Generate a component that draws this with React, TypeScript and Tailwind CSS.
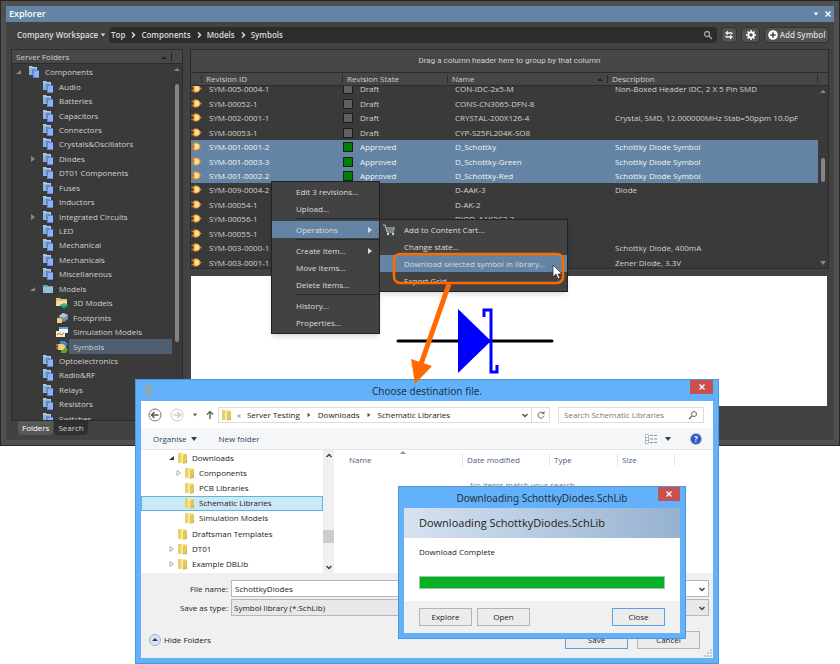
import React from 'react';

type FolderIcon = 'stack' | 'folder' | 'model3d' | 'footprint' | 'simulation' | 'symbol';

interface ServerFolder {
  name: string;
  level: 0 | 1 | 2;
  icon: FolderIcon;
  arrow?: 'open' | 'closed';
  selected?: boolean;
}

const serverFolders: ServerFolder[] = [
  { name: 'Components', level: 0, icon: 'stack', arrow: 'open' },
  { name: 'Audio', level: 1, icon: 'stack' },
  { name: 'Batteries', level: 1, icon: 'stack' },
  { name: 'Capacitors', level: 1, icon: 'stack' },
  { name: 'Connectors', level: 1, icon: 'stack' },
  { name: 'Crystals&Oscillators', level: 1, icon: 'stack' },
  { name: 'Diodes', level: 1, icon: 'stack', arrow: 'closed' },
  { name: 'DT01 Components', level: 1, icon: 'stack' },
  { name: 'Fuses', level: 1, icon: 'stack' },
  { name: 'Inductors', level: 1, icon: 'stack' },
  { name: 'Integrated Circuits', level: 1, icon: 'stack', arrow: 'closed' },
  { name: 'LED', level: 1, icon: 'stack' },
  { name: 'Mechanical', level: 1, icon: 'stack' },
  { name: 'Mechanicals', level: 1, icon: 'stack' },
  { name: 'Miscellaneous', level: 1, icon: 'stack' },
  { name: 'Models', level: 1, icon: 'folder', arrow: 'open' },
  { name: '3D Models', level: 2, icon: 'model3d' },
  { name: 'Footprints', level: 2, icon: 'footprint' },
  { name: 'Simulation Models', level: 2, icon: 'simulation' },
  { name: 'Symbols', level: 2, icon: 'symbol', selected: true },
  { name: 'Optoelectronics', level: 1, icon: 'stack' },
  { name: 'Radio&RF', level: 1, icon: 'stack' },
  { name: 'Relays', level: 1, icon: 'stack' },
  { name: 'Resistors', level: 1, icon: 'stack' },
  { name: 'Switches', level: 1, icon: 'stack' },
];

const levelPadding = {
  0: 'pl-1',
  1: 'pl-[18px]',
  2: 'pl-8',
};

interface Revision {
  id: string;
  state?: 'Draft' | 'Approved';
  name: string;
  description: string;
}

const revisions: Revision[] = [
  { id: 'SYM-005-0004-1', state: 'Draft', name: 'CON-IDC-2x5-M', description: 'Non-Boxed Header IDC, 2 X 5 Pin SMD' },
  { id: 'SYM-00052-1', state: 'Draft', name: 'CONS-CN3065-DFN-8', description: '' },
  { id: 'SYM-002-0001-1', state: 'Draft', name: 'CRYSTAL-200X126-4', description: 'Crystal, SMD, 12.000000MHz Stab=50ppm 10.0pF' },
  { id: 'SYM-00053-1', state: 'Draft', name: 'CYP-S25FL204K-SO8', description: '' },
  { id: 'SYM-001-0001-2', state: 'Approved', name: 'D_Schottky', description: 'Schottky Diode Symbol' },
  { id: 'SYM-001-0003-3', state: 'Approved', name: 'D_Schottky-Green', description: 'Schottky Diode Symbol' },
  { id: 'SYM-001-0002-2', state: 'Approved', name: 'D_Schottky-Red', description: 'Schottky Diode Symbol' },
  { id: 'SYM-009-0004-2', name: 'D-AAK-3', description: 'Diode' },
  { id: 'SYM-00054-1', name: 'D-AK-2', description: '' },
  { id: 'SYM-00056-1', name: 'DIOD_A1K2C3-3', description: '' },
  { id: 'SYM-00055-1', name: '', description: '' },
  { id: 'SYM-003-0000-1', name: '', description: 'Schottky Diode, 400mA' },
  { id: 'SYM-003-0001-1', name: '', description: 'Zener Diode, 3.3V' },
];

const localFolders = [
  { name: 'Downloads', nested: false, arrow: 'open' },
  { name: 'Components', nested: true, arrow: 'closed' },
  { name: 'PCB Libraries', nested: true },
  { name: 'Schematic Libraries', nested: true, selected: true },
  { name: 'Simulation Models', nested: true },
  { name: 'Draftsman Templates', nested: false },
  { name: 'DT01', nested: false, arrow: 'closed' },
  { name: 'Example DBLib', nested: false, arrow: 'closed' },
  { name: '', nested: false },
];

const gridColumns = 'grid grid-cols-[10px_141px_105px_160px_1fr_11px]';

function TreeIcon({ icon }: { icon: FolderIcon }) {
  return (
    <svg viewBox="0 0 12 12" className="h-3 w-3 shrink-0">
      {icon === 'stack' && (
        <>
          <path d="M1 0h3l1 1h4v8H1z" fill="#a9cbdf" />
          <path d="M1 2h7v7H1z" fill="#8fb4cf" />
          <path d="M4 3h3l1 1h3v8H5V8H4z" fill="#5f86d8" />
          <path d="M6 5h5v6H6z" fill="#8fb0fa" />
        </>
      )}
      {icon === 'folder' && (
        <>
          <path d="M1 2h4l1 1h5v7H1z" fill="#6fa3c4" />
          <path d="M1 4h10v6H1z" fill="#93c1dd" />
        </>
      )}
      {icon === 'model3d' && (
        <>
          <path d="M0 1h4l1 1h6v7H0z" fill="#e7bd79" />
          <path d="M1 4h10L9 9H0z" fill="#f5dca8" />
          <path d="M4 8l4-2 4 2-4 3z" fill="#35b383" />
          <path d="M4 8l4 2 4-2v1l-4 3-4-3z" fill="#1d8a60" />
        </>
      )}
      {icon === 'footprint' && (
        <>
          <path d="M3 4l4-3 5 2v4L8 10 3 8z" fill="#7d8fa0" />
          <path d="M3 4l4-3 5 2-4 3z" fill="#b4c4d2" />
          <path d="M1 6h2l3 1v4H1z" fill="#f1cd85" />
        </>
      )}
      {icon === 'simulation' && (
        <>
          <path d="M3 1h9v6H3z" fill="#f2f6fa" />
          <path d="M3 1h9v2H3z" fill="#5ba3dc" />
          <path d="M0 5h9v6H0z" fill="#f7ead2" />
          <path d="M1 9l2-2 2 2 3-2" fill="none" stroke="#c27a3c" />
        </>
      )}
      {icon === 'symbol' && (
        <>
          <path d="M4 0h5l3 3-3 3H4z" fill="#3f7fe0" />
          <path d="M5 6h5l2 3-2 3H5z" fill="#5a9e42" />
          <path d="M2 3h5l3 2.500-3 3.500H2z" fill="#f3cf6a" />
          <path d="M0 4h3M0 7h3" stroke="#e5a93c" />
        </>
      )}
    </svg>
  );
}

function GateIcon() {
  return (
    <svg viewBox="0 0 11 10" className="h-2.5 w-[11px]">
      <path d="M0.500 2.500h3M0.500 6.500h3M8 4.500h2.500" stroke="#e8791c" strokeWidth="1.500" />
      <path d="M3 1h3c4 1 4 6 0 7H3z" fill="#f8e08c" stroke="#e78a2a" />
    </svg>
  );
}

function YellowFolder() {
  return (
    <svg viewBox="0 0 12 12" className="h-3 w-3 shrink-0">
      <path d="M1 1h4l1 2v8H1z" fill="#ecd06a" />
      <path d="M4 1h5v10H4z" fill="#f8e79d" />
      <path d="M6 3l4-1v9L6 12z" fill="#e6c657" />
      <path d="M9 8h1v3H9z" fill="#8fb8a0" />
    </svg>
  );
}

function Arrow({ direction, className = '' }: { direction: 'up' | 'down' | 'right' | 'corner'; className?: string }) {
  const paths = {
    up: 'M0 5l3-3 3 3z',
    down: 'M0 1h6L3 5z',
    right: 'M1 0l4 3-4 3z',
    corner: 'M5 1v4H0z',
  };
  return (
    <svg viewBox="0 0 6 6" className={`h-1.5 w-1.5 shrink-0 ${className}`}>
      <path d={paths[direction]} fill="currentColor" />
    </svg>
  );
}

function Chevron({ direction, className = '' }: { direction: 'up' | 'down' | 'right'; className?: string }) {
  const paths = { up: 'M1.500 5L4 2.500 6.500 5', down: 'M1.500 3L4 5.500 6.500 3', right: 'M3 1.500L5.500 4 3 6.500' };
  return (
    <svg viewBox="0 0 8 8" className={`h-2 w-2 shrink-0 ${className}`}>
      <path d={paths[direction]} fill="none" stroke="currentColor" strokeWidth="1.500" />
    </svg>
  );
}

function CloseIcon() {
  return (
    <svg viewBox="0 0 6 6" className="h-1.5 w-1.5">
      <path d="M0.500 0.500l5 5M5.500 0.500l-5 5" stroke="currentColor" strokeWidth="1.300" />
    </svg>
  );
}

function Toolbar() {
  const crumbs = ['Top', 'Components', 'Models', 'Symbols'];
  return (
    <div className="flex h-4 items-center gap-1 pr-[5px] pl-[11px] font-semibold text-[#dcdcdc]">
      <button className="flex w-[88px] shrink-0 items-center gap-0.5 whitespace-nowrap">
        Company Workspace
        <Arrow direction="down" className="scale-75" />
      </button>
      <nav className="flex h-full flex-1 items-center rounded-sm bg-[#2c2c2c] pr-1 pl-0.5">
        {crumbs.map((crumb, i) => (
          <React.Fragment key={crumb}>
            {i > 0 && <Chevron direction="right" className="mx-1" />}
            <button>{crumb}</button>
          </React.Fragment>
        ))}
        <button aria-label="Search" className="ml-auto">
          <svg viewBox="0 0 10 10" className="h-2.5 w-2.5">
            <circle cx="4" cy="4" r="2.500" fill="none" stroke="#a0a0a0" strokeWidth="1.300" />
            <path d="M6 6l3 3" stroke="#a0a0a0" strokeWidth="1.500" />
          </svg>
        </button>
      </nav>
      <button aria-label="Refresh" className="flex h-full w-4 items-center justify-center rounded-sm border border-[#333] bg-[#525252]">
        <svg viewBox="0 0 10 10" className="h-2.5 w-2.5 shrink-0">
          <path d="M3 3h4.500l1 1M7 7H2.500l-1-1" fill="none" stroke="#eee" strokeWidth="1.400" />
          <path d="M4 .5v5L1 3zM6 4.500v5L9 7z" fill="#eee" />
        </svg>
      </button>
      <button aria-label="Settings" className="flex h-full w-[19px] items-center justify-center rounded-sm border border-[#333] bg-[#525252]">
        <svg viewBox="0 0 10 10" className="h-2.5 w-2.5">
          <circle cx="5" cy="5" r="2.700" fill="none" stroke="#fff" strokeWidth="1.800" />
          <path d="M5 0v2M5 8v2M0 5h2M8 5h2M1.500 1.500l1.400 1.400M7.100 7.100l1.400 1.400M8.500 1.500L7.100 2.900M2.900 7.100L1.500 8.500" stroke="#fff" strokeWidth="1.500" />
        </svg>
      </button>
      <button className="flex h-full w-[65px] items-center justify-center gap-0.5 rounded-sm border border-[#333] bg-[#525252] whitespace-nowrap">
        <svg viewBox="0 0 10 10" className="h-2.5 w-2.5 shrink-0">
          <circle cx="5" cy="5" r="4.800" fill="#fff" />
          <path d="M5 2.300v5.400M2.300 5h5.400" stroke="#444" strokeWidth="1.500" />
        </svg>
        Add Symbol
      </button>
    </div>
  );
}

function FolderTree() {
  return (
    <aside className="flex w-[172px] shrink-0 flex-col">
      <div className="border border-[#2c2c2c] bg-[#3a3a3a]">
        <div className="flex h-3.5 items-center border-b border-[#2c2c2c] bg-[#484848] px-1">
          Server Folders
          <Arrow direction="up" className="ml-auto text-[#222]" />
          <span className="mr-1.5 ml-1 h-2 border-l border-[#222]" />
        </div>
        <div className="flex h-[356px] overflow-hidden">
          <ul className="mt-px grid h-[361px] flex-1 auto-rows-fr">
            {serverFolders.map((folder) => (
              <li key={folder.name} className={`flex items-center ${levelPadding[folder.level]}`}>
                <span className="w-3 text-[#888]">
                  {folder.arrow && <Arrow direction={folder.arrow === 'open' ? 'corner' : 'right'} />}
                </span>
                <TreeIcon icon={folder.icon} />
                <button className={`ml-px h-full flex-1 pl-1 text-left ${folder.selected ? 'bg-[#4f5f70]' : ''}`}>
                  {folder.name}
                </button>
              </li>
            ))}
          </ul>
          <div className="flex w-2.5 flex-col items-center text-[#888]">
            <Arrow direction="up" className="mt-0.5" />
            <div className="mt-3 h-[258px] w-1 rounded-sm bg-[#858585]" />
          </div>
        </div>
      </div>
      <div className="flex h-3.5 gap-px pl-[7px]">
        <button className="rounded-b-sm bg-[#585858] px-1 text-white">Folders</button>
        <button className="rounded-b-sm bg-[#303030] px-1">Search</button>
      </div>
    </aside>
  );
}

function RevisionGrid() {
  return (
    <div className="flex flex-col overflow-hidden border border-[#2c2c2c] bg-[#3a3a3a]">
      <div className="flex h-[22px] items-center justify-center bg-[#464646] font-[Roboto]">
        Drag a column header here to group by that column
      </div>
      <div className="relative">
        <table className="block h-[196px] overflow-hidden text-left">
          <thead className="relative z-10 block border-y border-[#2c2c2c] bg-[#464646]">
            <tr className={`${gridColumns} h-3 items-center`}>
              <th aria-label="Type" />
              <th className="border-l border-[#2c2c2c] pl-1 leading-none font-normal">Revision ID</th>
              <th className="border-l border-[#2c2c2c] pl-1 leading-none font-normal">Revision State</th>
              <th className="flex items-center justify-between border-l border-[#2c2c2c] px-1 leading-none font-normal">
                Name
                <Arrow direction="up" className="text-[#222]" />
              </th>
              <th className="border-l border-[#2c2c2c] pl-1 leading-none font-normal">Description</th>
              <th className="h-2 border-l border-[#2c2c2c]" />
            </tr>
          </thead>
          <tbody className="-mt-1 grid h-[188px] auto-rows-fr">
            {revisions.map((rev) => (
              <tr
                key={rev.id}
                className={`${gridColumns} mr-2.5 items-center ${
                  rev.state === 'Approved' ? 'bg-[#6384a4] text-[#f4f4f4]' : ''
                }`}
              >
                <td><GateIcon /></td>
                <td className="pl-2">{rev.id}</td>
                <td className="flex items-center gap-[7px] pl-px">
                  {rev.state && (
                    <>
                      <span
                        className={`h-2.5 w-2.5 border border-[#1c1c1c] ${
                          rev.state === 'Approved' ? 'bg-[#008000]' : 'bg-[#606060]'
                        }`}
                      />
                      {rev.state}
                    </>
                  )}
                </td>
                <td className="pl-2">{rev.name}</td>
                <td className="pl-2 whitespace-nowrap">{rev.description}</td>
              </tr>
            ))}
          </tbody>
        </table>
        {/* Scrollbar */}
        <div className="absolute top-4 right-0 bottom-0.5 flex w-2.5 flex-col items-center text-[#888]">
          <Arrow direction="up" />
          <div className="mt-16 h-6 w-1 rounded-sm bg-[#858585]" />
          <Arrow direction="down" className="mt-auto" />
        </div>
      </div>
    </div>
  );
}

function SymbolPreview() {
  return (
    <div className="mr-0.5 ml-px h-[130px] bg-white pl-[204px]">
      <svg viewBox="0 0 160 130" className="h-[130px] w-40">
        <path d="M3 65h154" stroke="#000" strokeWidth="3" strokeLinecap="round" />
        <path d="M63 33v64l33-32z" fill="#00f" />
        <path d="M89 41v-7h7v62h6v-7" fill="none" stroke="#00f" strokeWidth="3" />
      </svg>
    </div>
  );
}

function MenuItem({ label, active, submenu, icon }: { label: string; active?: boolean; submenu?: boolean; icon?: React.ReactNode }) {
  return (
    <button className={`flex h-[17px] w-full items-center pr-1.5 text-left whitespace-nowrap ${active ? 'bg-[#6384a4]' : ''}`}>
      <span className="w-6 shrink-0 pl-0.5">{icon}</span>
      {label}
      {submenu && <Arrow direction="right" className="ml-auto" />}
    </button>
  );
}

function MenuDivider() {
  return <hr className="mt-px mb-0.5 ml-6 border-[#2a2a2a]" />;
}

function ContextMenus() {
  return (
    <div className="text-[#dcdcdc]">
      <div className="absolute top-[181px] left-[271px] w-[109px] border border-[#222] bg-[#424242] pt-px pb-0.5 shadow-md">
        <MenuItem label="Edit 3 revisions..." />
        <MenuItem label="Upload..." />
        <MenuDivider />
        <MenuItem label="Operations" active submenu />
        <MenuDivider />
        <MenuItem label="Create Item..." submenu />
        <MenuItem label="Move Items..." />
        <MenuItem label="Delete Items..." />
        <MenuDivider />
        <MenuItem label="History..." />
        <MenuItem label="Properties..." />
      </div>
      <div className="absolute top-[219px] left-[379px] w-[189px] border border-[#222] bg-[#424242] pt-px pb-0.5 shadow-md">
        <MenuItem
          label="Add to Content Cart..."
          icon={
            <svg viewBox="0 0 14 12" className="h-3 w-3.5">
              <path d="M1 1h2l2 7h7" fill="none" stroke="#b8ccd0" />
              <path d="M4 3h9l-1 4H5z" fill="#8fa8ad" />
              <path d="M6 3v4M8 3v4M10 3v4" stroke="#424242" strokeWidth=".7" />
              <circle cx="6" cy="10" r="1.200" fill="#c8d4d6" />
              <circle cx="11" cy="10" r="1.200" fill="#c8d4d6" />
            </svg>
          }
        />
        <MenuItem label="Change state..." />
        <MenuItem label="Download selected symbol in library..." active />
        <MenuItem label="Export Grid..." />
      </div>
      {/* Callout */}
      <svg viewBox="0 0 180 140" className="absolute top-[250px] left-[390px] z-20 h-[140px] w-[180px]">
        <rect x="4" y="4" width="169" height="29" rx="6" fill="none" stroke="#ff6a00" strokeWidth="2.500" />
        <path d="M59 34L31 114" stroke="#ff6a00" strokeWidth="5" />
        <path d="M21 109l21 7-17 18z" fill="#ff6a00" />
        <path d="M163 15v12l3-3 2 5 2-1-2-4h4z" fill="#fff" stroke="#222" strokeWidth=".7" />
      </svg>
    </div>
  );
}

function ExplorerPanel() {
  return (
    <section className="border border-[#262626] bg-[#505050] p-[5px] leading-3 text-[#d0d0d0]">
      <header className="flex h-4 items-center bg-[#6384a4] px-[3px] text-white">
        <h1 className="text-[9px] font-semibold">Explorer</h1>
        <button aria-label="Panel options" className="ml-auto"><Arrow direction="down" className="scale-75" /></button>
        <button aria-label="Close panel" className="ml-1.5"><CloseIcon /></button>
      </header>
      <div className="bg-[#424242] py-[5px]">
        <Toolbar />
        <div className="mt-1.5 flex gap-[7px] px-[5px]">
          <FolderTree />
          <div className="flex min-w-0 flex-1 flex-col gap-[7px]">
            <RevisionGrid />
            <SymbolPreview />
          </div>
        </div>
      </div>
    </section>
  );
}

function AddressBar() {
  return (
    <div className="flex h-[27px] items-center gap-2 pr-[9px] pl-[7px] text-[#222]">
      <button aria-label="Back">
        <svg viewBox="0 0 14 14" className="h-3.5 w-3.5">
          <circle cx="7" cy="7" r="6" fill="none" stroke="#777" />
          <path d="M10.500 7h-7M6.500 4l-3 3 3 3" fill="none" stroke="#555" strokeWidth="1.400" />
        </svg>
      </button>
      <button aria-label="Forward">
        <svg viewBox="0 0 14 14" className="h-3.5 w-3.5">
          <circle cx="7" cy="7" r="6" fill="none" stroke="#ccc" />
          <path d="M3.500 7h7M7.500 4l3 3-3 3" fill="none" stroke="#ccc" strokeWidth="1.400" />
        </svg>
      </button>
      <button aria-label="Recent locations"><Arrow direction="down" className="scale-75 text-[#666]" /></button>
      <button aria-label="Up">
        <svg viewBox="0 0 8 10" className="h-2.5 w-2">
          <path d="M4 9V2M1 4.500L4 1.500l3 3" fill="none" stroke="#666" strokeWidth="1.500" />
        </svg>
      </button>
      <div className="-ml-1 flex h-4 flex-1 items-center border border-[#dcdcdc] pl-0.5 whitespace-nowrap">
        <YellowFolder />
        <span className="mr-1.5 ml-1 text-[#666]">«</span>
        <button>Server Testing</button>
        <Arrow direction="right" className="mx-1.5 scale-75 text-[#555]" />
        <button>Downloads</button>
        <Arrow direction="right" className="mx-1.5 scale-75 text-[#555]" />
        <button>Schematic Libraries</button>
        <button aria-label="Previous locations" className="ml-auto px-0.5"><Chevron direction="down" className="text-[#555]" /></button>
        <button aria-label="Refresh" className="flex h-full w-[18px] items-center justify-center border-l border-[#dcdcdc]">
          <svg viewBox="0 0 8 8" className="h-2 w-2">
            <path d="M6.500 2.500a3 3 0 1 0 .5 2" fill="none" stroke="#666" />
            <path d="M7.500 0v3h-3z" fill="#666" />
          </svg>
        </button>
      </div>
      <label className="flex h-4 w-[146px] items-center border border-[#dcdcdc] px-[5px]">
        <input
          type="text"
          aria-label="Search Schematic Libraries"
          placeholder="Search Schematic Libraries"
          className="min-w-0 flex-1 outline-none placeholder:text-[#777]"
        />
        <svg viewBox="0 0 10 10" className="h-2.5 w-2.5">
          <circle cx="6" cy="4" r="2.500" fill="none" stroke="#666" />
          <path d="M4 6L1 9" stroke="#666" strokeWidth="1.300" />
        </svg>
      </label>
    </div>
  );
}

function LocalTree() {
  return (
    <div className="flex w-[193px] shrink-0">
      <ul className="grid h-[137px] flex-1 auto-rows-fr">
        {localFolders.map((folder) => (
          <li
            key={folder.name}
            className={`flex items-center border ${folder.nested ? 'pl-[34px]' : 'pl-[27px]'} ${
              folder.selected ? 'border-[#5fb4dc] bg-[#cbe8f6]' : 'border-transparent'
            }`}
          >
            <span className="w-2">
              {folder.arrow === 'open' && <Arrow direction="corner" className="text-[#333]" />}
              {folder.arrow === 'closed' && (
                <svg viewBox="0 0 6 6" className="h-1.5 w-1.5">
                  <path d="M1 .5l3.500 2.500L1 5.500z" fill="none" stroke="#999" strokeWidth=".8" />
                </svg>
              )}
            </span>
            <YellowFolder />
            {folder.name && <button className="pl-[3px]">{folder.name}</button>}
          </li>
        ))}
      </ul>
      <div className="flex h-[123px] w-[11px] flex-col items-center bg-[#f0f0f0] py-0.5 text-[#444]">
        <Chevron direction="up" />
        <div className="mt-[70px] h-[13px] w-full bg-[#cdcdcd]" />
        <Chevron direction="down" className="mt-auto" />
      </div>
    </div>
  );
}

function SaveDialog() {
  return (
    <section className="absolute top-[379px] left-[135px] w-[584px] border border-[#4a97dd] bg-[#63b1fb] px-[5px] pb-[5px] leading-3 text-[#222]">
      <header className="relative flex h-[21px] items-center justify-center">
        <svg viewBox="0 0 10 12" className="absolute left-0.5 h-3 w-2.5">
          <path d="M2 1.500c5-1 7 2 6 5S4 11 2 10M1 4l3 1" fill="none" stroke="#b8a05c" strokeWidth="1.800" />
        </svg>
        <h2 className="font-['Noto_Sans'] text-[10px] text-[#234]">Choose destination file.</h2>
        <button aria-label="Close" className="absolute top-0 right-0 flex h-3.5 w-[23px] items-center justify-center bg-[#c75050] text-white">
          <CloseIcon />
        </button>
      </header>
      <div className="bg-white">
        <AddressBar />
        <div className="flex h-[22px] items-center border-b border-[#e4e6e8] bg-[#f5f6f7] px-3 text-[#2a3f5c]">
          <button className="flex items-center gap-1">
            Organise
            <Arrow direction="down" />
          </button>
          <button className="ml-[22px]">New folder</button>
          <button aria-label="Change view" className="ml-auto flex items-center gap-2">
            <svg viewBox="0 0 12 10" className="h-2.5 w-3">
              <path d="M.5.5h3v9h-3zM.5 3.500h3M.5 6.500h3" fill="#fff" stroke="#9ab" strokeWidth=".8" />
              <path d="M5 1.500h3M9 1.500h3M5 5h3M9 5h3M5 8.500h3M9 8.500h3" stroke="#789" strokeWidth=".9" />
            </svg>
            <Arrow direction="down" />
          </button>
          <button aria-label="Help" className="ml-5 h-2.5 w-2.5 rounded-full bg-[#2859c5] text-[8px] leading-[10px] font-bold text-white ring-1 ring-[#aab]">
            ?
          </button>
        </div>
        <div className="flex h-[123px] overflow-hidden">
          <LocalTree />
          <div className="relative flex-1 text-[#4c607a]">
            <div className="flex h-4 items-end pl-[15px]">
              <button className="w-[113px] text-left">Name</button>
              <button className="w-[87px] border-l border-[#dde8f2] pl-1 text-left">Date modified</button>
              <button className="w-[68px] border-l border-[#dde8f2] pl-1 text-left">Type</button>
              <button className="w-[58px] border-x border-[#dde8f2] pl-1 text-left">Size</button>
            </div>
            <Arrow direction="up" className="absolute -top-px left-[66px] text-[#6a9cc0]" />
            <p className="mt-[13px] text-center text-[#777]">No items match your search.</p>
          </div>
        </div>
        <div className="bg-[#f0f0f0] pt-[7px] pb-[9px]">
          <div className="grid grid-cols-[87px_1fr] gap-x-[3px] gap-y-0.5 pr-1">
            <label htmlFor="file-name" className="self-center text-right">File name:</label>
            <div className="flex h-[17px] items-center border border-[#b8b8b8] bg-white pr-0.5">
              <input id="file-name" type="text" defaultValue="SchottkyDiodes" className="min-w-0 flex-1 px-[3px] outline-none" />
              <Chevron direction="down" className="text-[#444]" />
            </div>
            <label htmlFor="file-type" className="self-center text-right">Save as type:</label>
            <div className="flex h-[17px] items-center border border-[#b8b8b8] bg-[#e8e8e8] pr-0.5">
              <select id="file-type" className="min-w-0 flex-1 appearance-none px-0.5 outline-none">
                <option>Symbol library (*.SchLib)</option>
              </select>
              <Chevron direction="down" className="text-[#444]" />
            </div>
          </div>
          <div className="mt-[15px] flex items-center gap-[9px] pr-[13px] pl-2">
            <button className="mr-auto flex items-center gap-[3px]">
              <svg viewBox="0 0 12 12" className="h-3 w-3">
                <circle cx="6" cy="6" r="5.500" fill="#dde4f0" stroke="#a5afc2" />
                <path d="M3 7l3-3 3 3z" fill="#223a7a" />
              </svg>
              Hide Folders
            </button>
            <button className="h-[18px] w-[63px] border border-[#5a9fe8] bg-[#ececec]">Save</button>
            <button className="h-[18px] w-[63px] border border-[#b4b4b4] bg-[#ececec]">Cancel</button>
          </div>
        </div>
      </div>
      <svg viewBox="0 0 8 8" className="absolute right-1.5 bottom-1.5 h-2 w-2">
        <path d="M6 0h2v2H6zM3 3h2v2H3zM6 3h2v2H6zM0 6h2v2H0zM3 6h2v2H3zM6 6h2v2H6z" fill="#c8c8c8" />
      </svg>
    </section>
  );
}

function DownloadDialog() {
  return (
    <section className="absolute top-[486px] left-[398px] w-[288px] border border-[#4a97dd] bg-[#63b1fb] px-[5px] pb-[5px] leading-3 text-[#222]">
      <header className="relative flex h-[21px] items-center justify-center">
        <h2 className="font-['Noto_Sans'] text-[10px] text-[#234]">Downloading SchottkyDiodes.SchLib</h2>
        <button aria-label="Close" className="absolute top-0 right-0 flex h-3.5 w-[22px] items-center justify-center bg-[#c75050] text-white">
          <CloseIcon />
        </button>
      </header>
      <div className="bg-white">
        <h3 className="bg-linear-to-r from-[#d6e3f1] to-[#96b2d0] px-[15px] py-2 text-[11px] leading-[14px]">
          Downloading SchottkyDiodes.SchLib
        </h3>
        <div className="px-[15px] pt-2 pb-3">
          <p>Download Complete</p>
          <div className="mt-[18px] h-[13px] border border-[#a0c8a4] bg-[#06b025]" />
        </div>
        <div className="flex gap-[5px] bg-[#f0f0f0] px-[15px] py-[7px]">
          <button className="h-[18px] w-[53px] border border-[#b4b4b4] bg-[#ececec]">Explore</button>
          <button className="h-[18px] w-[53px] border border-[#b4b4b4] bg-[#ececec]">Open</button>
          <button className="ml-auto h-[18px] w-[53px] border border-[#5a9fe8] bg-[#ececec]">Close</button>
        </div>
      </div>
    </section>
  );
}

export default function App() {
  return (
    <main className="relative min-h-screen bg-white font-['Open_Sans','Noto_Sans',sans-serif] text-[8px]">
      <ExplorerPanel />
      <ContextMenus />
      <SaveDialog />
      <DownloadDialog />
    </main>
  );
}
